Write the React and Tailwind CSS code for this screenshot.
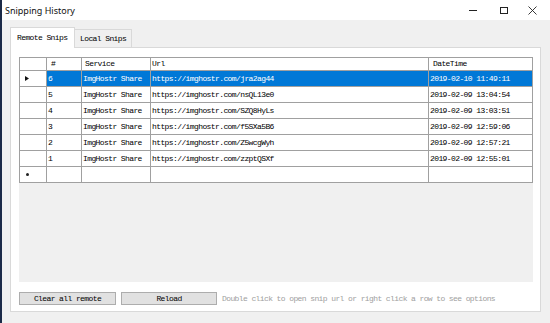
import React from "react";

const rows = [
  ["6", "ImgHostr Share", "https://imghostr.com/jra2ag44", "2019-02-10 11:49:11", true],
  ["5", "ImgHostr Share", "https://imghostr.com/nsQL13e0", "2019-02-09 13:04:54"],
  ["4", "ImgHostr Share", "https://imghostr.com/SZQ8HyLs", "2019-02-09 13:03:51"],
  ["3", "ImgHostr Share", "https://imghostr.com/f5SXa5B6", "2019-02-09 12:59:06"],
  ["2", "ImgHostr Share", "https://imghostr.com/Z5wcgWyh", "2019-02-09 12:57:21"],
  ["1", "ImgHostr Share", "https://imghostr.com/zzptQSXf", "2019-02-09 12:55:01"],
];

const mono = "font-['Liberation_Mono',monospace] text-[8px] tracking-[-0.6px] leading-none";

function Cell({ w, children, sel, first, className = "" }) {
  return (
    <div
      className={`${w} h-full shrink-0 flex items-center pl-[1px] border-r border-[#a0a0a0] overflow-hidden whitespace-nowrap ${
        first ? "border-l" : ""
      } ${sel ? "bg-[#0078d7] text-white" : "bg-white text-black"} ${className}`}
    >
      {children}
    </div>
  );
}

export default function App() {
  return (
    <div className="w-[550px] h-[323px] flex bg-[#f0f0f0] overflow-hidden">
      <div className="w-[2px] h-full bg-[#1b2a48] shrink-0" />
      <div className="flex-1 flex flex-col">
        {/* Title bar */}
        <div className="h-[20px] bg-white flex items-center justify-between shrink-0">
          <span className="pl-[3px] font-['Noto_Sans',sans-serif] text-[9px] text-[#111] leading-none">
            Snipping History
          </span>
          <div className="flex items-center h-full">
            <div className="w-[30px] h-full flex items-center justify-center">
              <svg width="8" height="8" viewBox="0 0 8 8">
                <line x1="0" y1="4.5" x2="8" y2="4.5" stroke="#222" strokeWidth="1" />
              </svg>
            </div>
            <div className="w-[30px] h-full flex items-center justify-center">
              <svg width="9" height="9" viewBox="0 0 9 9">
                <rect x="1.5" y="1.5" width="7" height="6" fill="none" stroke="#222" strokeWidth="1" />
              </svg>
            </div>
            <div className="w-[32px] h-full flex items-center justify-center pr-[4px]">
              <svg width="9" height="9" viewBox="0 0 9 9">
                <path d="M0.5 0.5 L8.5 8.5 M8.5 0.5 L0.5 8.5" stroke="#222" strokeWidth="0.9" fill="none" />
              </svg>
            </div>
          </div>
        </div>

        {/* Body */}
        <div className="pl-[8px] pt-[7px] flex flex-col">
          {/* Tabs */}
          <div className="flex items-end h-[21px] -mb-px relative z-10">
            <div className="w-[65px] h-[21px] bg-white border border-b-0 border-[#d9d9d9] flex items-center pl-[6px] pb-[1px]">
              <span className={mono + " text-black"}>Remote Snips</span>
            </div>
            <div className="w-[57px] h-[19px] bg-[#f0f0f0] border border-l-0 border-[#d9d9d9] flex items-center pl-[5px]">
              <span className={mono + " text-black"}>Local Snips</span>
            </div>
          </div>
          {/* Tab page */}
          <div className="w-[531px] h-[265px] bg-white border border-[#d9d9d9] pl-[8px] pt-[9px] flex flex-col">
            {/* Grid */}
            <div className={`w-[514px] h-[225px] bg-[#f0f0f0] flex flex-col ${mono}`}>
              <div className="flex h-[14px] border-t border-b border-[#a0a0a0]">
                <Cell w="w-[28px]" first />
                <Cell w="w-[35px]" className="pl-[4px]">#</Cell>
                <Cell w="w-[69px]" className="pl-[3px]">Service</Cell>
                <Cell w="w-[278px]" className="pl-[1px]">Url</Cell>
                <Cell w="w-[104px]" className="pl-[4px]">DateTime</Cell>
              </div>
              {rows.map((r) => (
                <div key={r[0]} className="flex h-[16px] border-b border-[#a0a0a0]">
                  <Cell w="w-[28px]" first className="pl-[5px]">
                    {r[4] ? (
                      <svg width="4" height="5" viewBox="0 0 4 5">
                        <path d="M0 0 L4 2.5 L0 5 Z" fill="#111" />
                      </svg>
                    ) : null}
                  </Cell>
                  <Cell w="w-[35px]" sel={r[4]}>{r[0]}</Cell>
                  <Cell w="w-[69px]" sel={r[4]}>{r[1]}</Cell>
                  <Cell w="w-[278px]" sel={r[4]}>{r[2]}</Cell>
                  <Cell w="w-[104px]" sel={r[4]}>{r[3]}</Cell>
                </div>
              ))}
              <div className="flex h-[16px] border-b border-[#a0a0a0]">
                <Cell w="w-[28px]" first className="pl-[6px]">
                  <div className="w-[3px] h-[3px] rounded-full bg-[#222]" />
                </Cell>
                <Cell w="w-[35px]" />
                <Cell w="w-[69px]" />
                <Cell w="w-[278px]" />
                <Cell w="w-[104px]" />
              </div>
            </div>
            {/* Buttons */}
            <div className={`flex items-center gap-[5px] mt-[10px] ${mono}`}>
              <div className="w-[97px] h-[13px] bg-[#e1e1e1] border border-[#adadad] flex items-center justify-center text-black">
                Clear all remote
              </div>
              <div className="w-[96px] h-[13px] bg-[#e1e1e1] border border-[#adadad] flex items-center justify-center text-black">
                Reload
              </div>
              <span className="text-[#a0a0a0] whitespace-nowrap">
                Double click to open snip url or right click a row to see options
              </span>
            </div>
          </div>
        </div>
      </div>
    </div>
  );
}
